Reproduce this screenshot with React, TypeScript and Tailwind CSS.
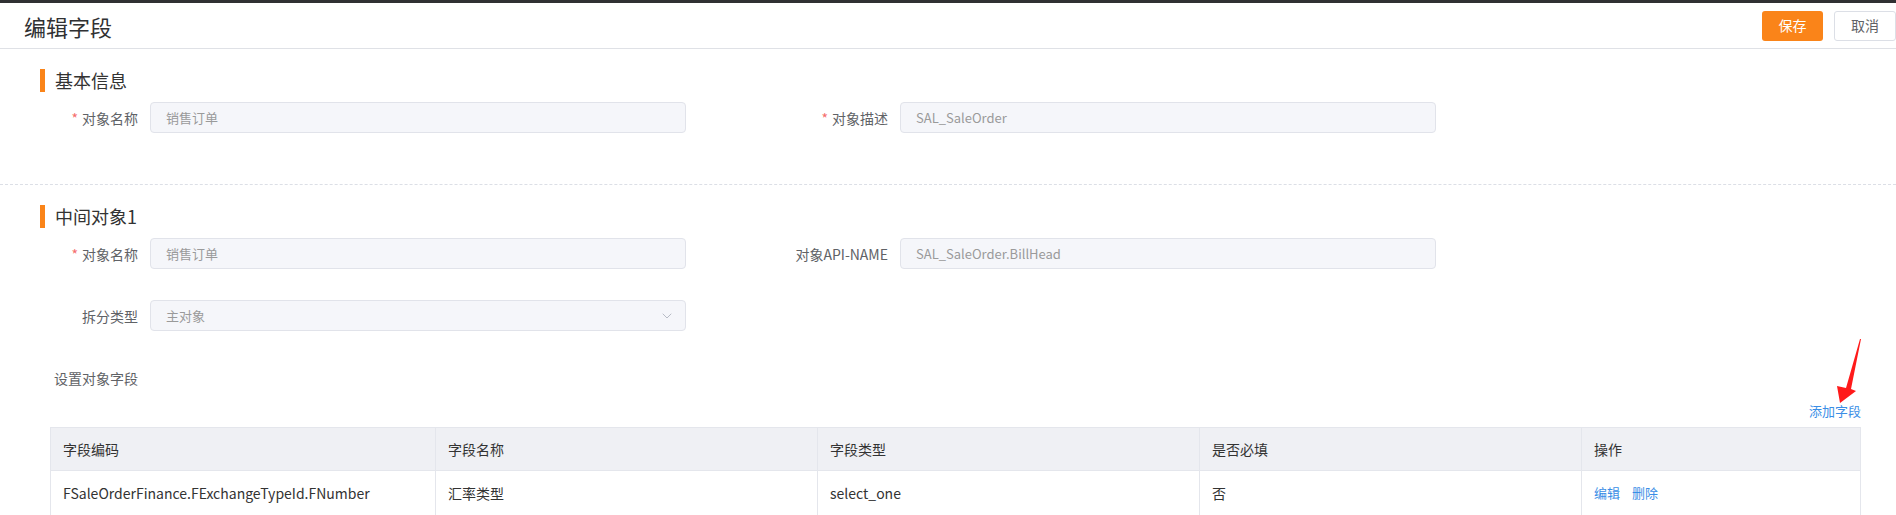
import { ChevronDown } from "lucide-react";

const FONT = "font-['Noto_Sans_CJK_SC','Noto_Sans',sans-serif]";

const COLUMNS = [
  { key: "code", title: "字段编码", width: "w-[384px]" },
  { key: "name", title: "字段名称", width: "w-[382px]" },
  { key: "type", title: "字段类型", width: "w-[382px]" },
  { key: "required", title: "是否必填", width: "w-[382px]" },
  { key: "action", title: "操作", width: "flex-1" },
];

const ROWS = [
  {
    code: "FSaleOrderFinance.FExchangeTypeId.FNumber",
    name: "汇率类型",
    type: "select_one",
    required: "否",
  },
];

function SectionTitle({ children }: { children: React.ReactNode }) {
  return (
    <div className="flex h-[23px] items-center pl-[40px]">
      <span className="h-[23px] w-[5px] bg-[#fa8419]" />
      <span className="ml-[10px] text-[18px] leading-[23px] text-[#333]">
        {children}
      </span>
    </div>
  );
}

function Field({
  label,
  value,
  required,
  select,
}: {
  label: string;
  value: string;
  required?: boolean;
  select?: boolean;
}) {
  return (
    <div className="flex w-[750px] items-center">
      <label className="w-[112px] shrink-0 pr-[12px] text-right text-[14px] leading-[20px] text-[#606266]">
        {required && <span className="mr-[4px] text-[#f56c6c]">*</span>}
        {label}
      </label>
      <div className="flex h-[31px] w-[536px] items-center justify-between rounded-[4px] border border-[#e1e3ea] bg-[#f5f6fa] pl-[15px] pr-[10px]">
        <span className="text-[13px] leading-[20px] text-[#9a9a9a]">{value}</span>
        {select && (
          <ChevronDown size={16} strokeWidth={1.5} className="text-[#b8bcc6]" />
        )}
      </div>
    </div>
  );
}

export default function App() {
  return (
    <div className={`${FONT} relative h-[515px] w-[1896px] overflow-hidden bg-white`}>
      <div className="h-[3px] bg-[#303133]" />

      {/* 头部 */}
      <div className="flex h-[46px] items-center justify-between border-b border-[#dfe1e6] pl-[24px]">
        <h1 className="text-[22px] leading-[30px] text-[#303133]">编辑字段</h1>
        <div className="flex gap-[11px]">
          <button className="h-[30px] w-[61px] rounded-[3px] bg-[#fa8419] text-[14px] text-white">
            保存
          </button>
          <button className="h-[30px] w-[62px] rounded-[3px] border border-[#dcdfe6] bg-white text-[14px] text-[#606266]">
            取消
          </button>
        </div>
      </div>

      {/* 基本信息 */}
      <div className="mt-[20px]">
        <SectionTitle>基本信息</SectionTitle>
        <div className="mt-[10px] flex pl-[38px]">
          <Field label="对象名称" value="销售订单" required />
          <Field label="对象描述" value="SAL_SaleOrder" required />
        </div>
      </div>

      <div className="mt-[51px] border-t border-dashed border-[#dcdfe6]" />

      {/* 中间对象1 */}
      <div className="mt-[20px]">
        <SectionTitle>中间对象1</SectionTitle>
        <div className="mt-[10px] flex pl-[38px]">
          <Field label="对象名称" value="销售订单" required />
          <Field label="对象API-NAME" value="SAL_SaleOrder.BillHead" />
        </div>
        <div className="mt-[31px] flex pl-[38px]">
          <Field label="拆分类型" value="主对象" select />
        </div>
      </div>

      <div className="mt-[37px] pl-[54px] text-[14px] leading-[20px] text-[#606266]">
        设置对象字段
      </div>

      <div className="ml-[50px] w-[1811px]">
        <div className="mt-[13px] text-right text-[13px] leading-[20px] text-[#3a8ee6]">
          添加字段
        </div>

        <div className="mt-[6px] border border-[#e4e6ec] text-[14px] text-[#333]">
          <div className="flex h-[42px] bg-[#eff0f4]">
            {COLUMNS.map((c, i) => (
              <div
                key={c.key}
                className={`${c.width} flex items-center px-[12px] ${
                  i > 0 ? "border-l border-[#e4e6ec]" : ""
                }`}
              >
                {c.title}
              </div>
            ))}
          </div>
          {ROWS.map((r) => (
            <div key={r.code} className="flex h-[45px] border-t border-[#e4e6ec]">
              <div className="flex w-[384px] items-center px-[12px]">{r.code}</div>
              <div className="flex w-[382px] items-center border-l border-[#e4e6ec] px-[12px]">
                {r.name}
              </div>
              <div className="flex w-[382px] items-center border-l border-[#e4e6ec] px-[12px]">
                {r.type}
              </div>
              <div className="flex w-[382px] items-center border-l border-[#e4e6ec] px-[12px]">
                {r.required}
              </div>
              <div className="flex flex-1 items-center gap-[12px] border-l border-[#e4e6ec] px-[12px] text-[13px] text-[#3a8ee6]">
                <span>编辑</span>
                <span>删除</span>
              </div>
            </div>
          ))}
        </div>
      </div>

      {/* 标注箭头 */}
      <svg
        className="pointer-events-none absolute left-[1830px] top-[335px]"
        width="35"
        height="72"
        viewBox="0 0 35 72"
      >
        <polygon
          points="31,4 21,54 26,56 10,68 7,51 16,53 30,4"
          fill="#ff1a1a"
        />
      </svg>
    </div>
  );
}
